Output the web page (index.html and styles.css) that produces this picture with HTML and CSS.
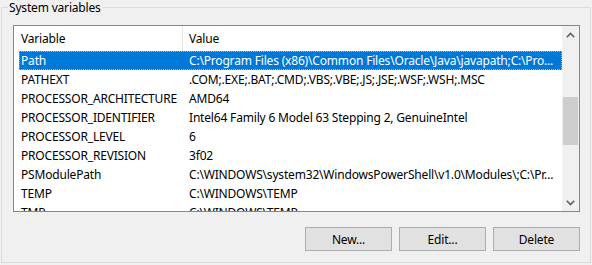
FILE: index.html
```html
<!DOCTYPE html>
<html>
<head>
<meta charset="utf-8">
<link rel="stylesheet" href="styles.css">
</head>
<body>
<div class="group">
  <span class="legend">System variables</span>
  <div class="listview">
    <div class="content">
      <div class="header">
        <div class="hcol c1">Variable</div>
        <div class="hcol c2">Value</div>
      </div>
      <div class="row selected"><div class="c1">Path</div><div class="c2">C:\Program Files (x86)\Common Files\Oracle\Java\javapath;C:\Pro...</div></div>
      <div class="row"><div class="c1">PATHEXT</div><div class="c2">.COM;.EXE;.BAT;.CMD;.VBS;.VBE;.JS;.JSE;.WSF;.WSH;.MSC</div></div>
      <div class="row"><div class="c1">PROCESSOR_ARCHITECTURE</div><div class="c2">AMD64</div></div>
      <div class="row"><div class="c1">PROCESSOR_IDENTIFIER</div><div class="c2">Intel64 Family 6 Model 63 Stepping 2, GenuineIntel</div></div>
      <div class="row"><div class="c1">PROCESSOR_LEVEL</div><div class="c2">6</div></div>
      <div class="row"><div class="c1">PROCESSOR_REVISION</div><div class="c2">3f02</div></div>
      <div class="row"><div class="c1">PSModulePath</div><div class="c2">C:\WINDOWS\system32\WindowsPowerShell\v1.0\Modules\;C:\Pr...</div></div>
      <div class="row"><div class="c1">TEMP</div><div class="c2">C:\WINDOWS\TEMP</div></div>
      <div class="row"><div class="c1">TMP</div><div class="c2">C:\WINDOWS\TEMP</div></div>
    </div>
    <div class="scrollbar">
      <div class="arrow">
        <svg width="9" height="6" viewBox="0 0 9 6"><path d="M0.8 5.2 L4.5 1.5 L8.2 5.2" fill="none" stroke="#606060" stroke-width="1.6"/></svg>
      </div>
      <div class="track">
        <div class="thumb"></div>
      </div>
      <div class="arrow">
        <svg width="9" height="6" viewBox="0 0 9 6"><path d="M0.8 0.8 L4.5 4.5 L8.2 0.8" fill="none" stroke="#606060" stroke-width="1.6"/></svg>
      </div>
    </div>
  </div>
  <div class="buttons">
    <button class="btn">New...</button>
    <button class="btn">Edit...</button>
    <button class="btn">Delete</button>
  </div>
</div>
</body>
</html>
```
FILE: styles.css
```css
html, body {
  margin: 0;
  padding: 0;
  background: #f0f0f0;
  font-family: "Noto Sans", "Open Sans", sans-serif;
  font-size: 12px;
  letter-spacing: -0.18px;
  color: #000;
}
body {
  width: 592px;
  height: 265px;
  overflow: hidden;
}
.group {
  position: relative;
  margin: 7px 0 0 1px;
  width: 588px;
  height: 254px;
  border: 1px solid #dcdcdc;
}
.legend {
  position: absolute;
  left: 6px;
  top: -8px;
  padding: 0 2px 0 1px;
  background: #f0f0f0;
  line-height: 15px;
}
.listview {
  margin: 17px 0 0 11px;
  width: 565px;
  height: 185px;
  border: 1px solid #828790;
  background: #fff;
  display: flex;
}
.content {
  flex: 1;
  padding-left: 5px;
  overflow: hidden;
}
.header {
  display: flex;
  height: 25px;
  align-items: center;
}
.c1 {
  width: 164px;
  flex: none;
  padding-left: 2px;
  box-sizing: border-box;
  white-space: nowrap;
}
.c2 {
  flex: 1;
  padding-left: 6px;
  white-space: nowrap;
  overflow: hidden;
}
.hcol.c1 {
  height: 25px;
  line-height: 25px;
  border-right: 1px solid #e5e5e5;
}
.hcol.c2 {
  line-height: 25px;
}
.row {
  display: flex;
  height: 19px;
  line-height: 19px;
  box-sizing: border-box;
}
.row.selected {
  background: #0078d7;
  color: #fff;
  border: 1px dotted #f2a65a;
  line-height: 17px;
}
.row.selected .c1 {
  padding-left: 1px;
}
.row.selected .c2 {
  padding-left: 5px;
}
.scrollbar {
  width: 17px;
  flex: none;
  background: #f0f0f0;
  display: flex;
  flex-direction: column;
}
.arrow {
  height: 17px;
  display: flex;
  align-items: center;
  justify-content: center;
}
.track {
  flex: 1;
  padding-top: 54px;
}
.thumb {
  margin: 0 1px;
  height: 48px;
  background: #cdcdcd;
}
.buttons {
  display: flex;
  justify-content: flex-end;
  gap: 7px;
  margin: 15px 0 0 0;
  width: 578px;
}
.btn {
  width: 87px;
  height: 24px;
  background: #e1e1e1;
  border: 1px solid #adadad;
  font-family: "Noto Sans", "Open Sans", sans-serif;
  font-size: 12px;
  letter-spacing: -0.18px;
  color: #000;
  padding: 0;
  margin: 0;
}
```
